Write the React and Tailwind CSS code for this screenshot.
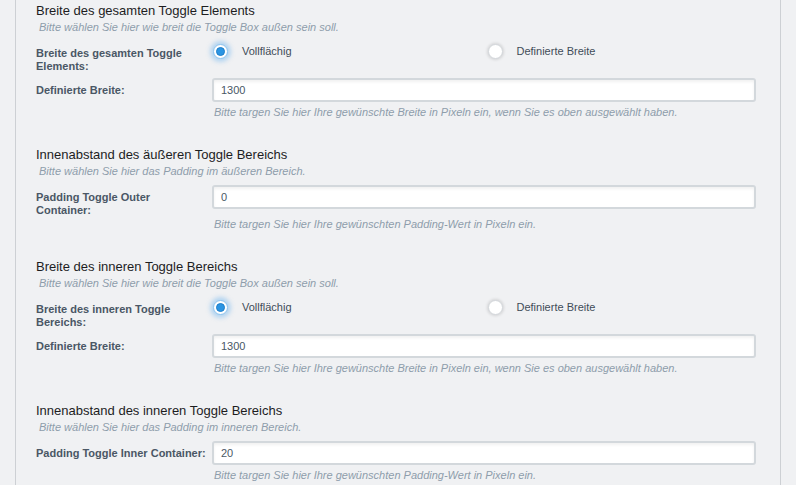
import React from "react";

const sections = [
  {
    title: "Breite des gesamten Toggle Elements",
    desc: "Bitte wählen Sie hier wie breit die Toggle Box außen sein soll.",
    radio: { label: "Breite des gesamten Toggle Elements:", checked: "full" },
    field: { label: "Definierte Breite:", value: "1300" },
    hint: "Bitte targen Sie hier Ihre gewünschte Breite in Pixeln ein, wenn Sie es oben ausgewählt haben.",
  },
  {
    title: "Innenabstand des äußeren Toggle Bereichs",
    desc: "Bitte wählen Sie hier das Padding im äußeren Bereich.",
    field: { label: "Padding Toggle Outer Container:", value: "0" },
    hint: "Bitte targen Sie hier Ihre gewünschten Padding-Wert in Pixeln ein.",
  },
  {
    title: "Breite des inneren Toggle Bereichs",
    desc: "Bitte wählen Sie hier wie breit die Toggle Box außen sein soll.",
    radio: { label: "Breite des inneren Toggle Bereichs:", checked: "full" },
    field: { label: "Definierte Breite:", value: "1300" },
    hint: "Bitte targen Sie hier Ihre gewünschte Breite in Pixeln ein, wenn Sie es oben ausgewählt haben.",
  },
  {
    title: "Innenabstand des inneren Toggle Bereichs",
    desc: "Bitte wählen Sie hier das Padding im inneren Bereich.",
    field: { label: "Padding Toggle Inner Container:", value: "20" },
    hint: "Bitte targen Sie hier Ihre gewünschten Padding-Wert in Pixeln ein.",
  },
];

const Radio = ({ checked, label }) => (
  <label className="flex items-center gap-[14px] cursor-pointer">
    {checked ? (
      <span className="w-[15px] h-[15px] rounded-full bg-white border border-[#8cc3ee] shadow-[0_0_4px_3px_rgba(120,185,240,0.5)] flex items-center justify-center">
        <span className="w-[9px] h-[9px] rounded-full bg-[#2b95e3] border border-[#1f7fc8]" />
      </span>
    ) : (
      <span className="w-[15px] h-[15px] rounded-full bg-white border border-[#d3d7db] shadow-[0_0_3px_1px_rgba(0,0,0,0.12)]" />
    )}
    <span className="text-[11px] text-[#414c58]">{label}</span>
  </label>
);

// label column; wrapped labels next to an input may hang a little below the row
const FieldLabel = ({ children, radio }) => (
  <div
    className={`w-[176px] shrink-0 pt-[7px] pr-[6px] text-[11px] leading-[13px] font-bold text-[#4a5765] ${
      radio ? "" : "-mb-[3px]"
    }`}
  >
    {children}
  </div>
);

const Section = ({ s }) => (
  <div className="pt-[3px] pb-[25px]">
    <div className="text-[13px] leading-[16px] text-[#1d1d1f]">{s.title}</div>
    <div className="mt-[1px] ml-[3px] text-[11px] leading-[14px] italic text-[#8e9dab]">{s.desc}</div>

    {s.radio && (
      <div className="flex mt-[6px]">
        <FieldLabel radio>{s.radio.label}</FieldLabel>
        <div className="flex-1 grid grid-cols-2 items-start pt-[3px] pl-[1px]">
          <Radio checked={s.radio.checked === "full"} label="Vollflächig" />
          <div className="pl-[3px]">
            <Radio checked={s.radio.checked === "custom"} label="Definierte Breite" />
          </div>
        </div>
      </div>
    )}

    <div className={`flex ${s.radio ? "mt-[4px]" : "mt-[6px]"}`}>
      <FieldLabel>{s.field.label}</FieldLabel>
      <div className="flex-1">
        <input
          type="text"
          defaultValue={s.field.value}
          className="w-full h-[24px] px-[7px] bg-white border-2 border-[#d3d8dc] rounded-[3px] shadow-[inset_0_2px_3px_rgba(0,0,0,0.06)] text-[11px] text-[#4a5765] outline-none"
        />
      </div>
    </div>
    <div className="flex mt-[3px]">
      <div className="w-[176px] shrink-0" />
      <div className="ml-[2px] text-[11px] leading-[14px] italic text-[#8e9dab]">{s.hint}</div>
    </div>
  </div>
);

const App = () => {
  return (
    <div className="w-[796px] h-[485px] overflow-hidden bg-[#f0f1f3] pl-[15px] font-['Liberation_Sans',Arial,sans-serif]">
      <div className="w-[766px] h-full border-l border-r border-[#cdd0d4] pl-[20px] pr-[24px]">
        {sections.map((s, i) => (
          <Section key={i} s={s} />
        ))}
      </div>
    </div>
  );
};

export default App;
